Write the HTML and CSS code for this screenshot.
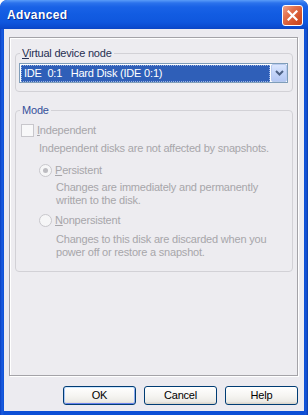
FILE: index.html
```html
<!DOCTYPE html>
<html>
<head>
<meta charset="utf-8">
<link rel="stylesheet" href="styles.css">
</head>
<body>
<div class="window">
  <div class="titlebar">
    <span class="title">Advanced</span>
    <span class="close">
      <svg width="11" height="11" viewBox="0 0 11 11"><path d="M1.5 1.5 L9.5 9.5 M9.5 1.5 L1.5 9.5" stroke="#fff" stroke-width="2.2" stroke-linecap="square"/></svg>
    </span>
  </div>
  <div class="client">
    <div class="page">
      <fieldset class="group g1">
        <legend><u>V</u>irtual device node</legend>
        <div class="combo">
          <div class="combo-field"><span class="combo-text">IDE  0:1   Hard Disk (IDE 0:1)</span></div>
          <span class="combo-btn">
            <svg width="9" height="6" viewBox="0 0 9 6"><path d="M1 1 L4.5 4.5 L8 1" fill="none" stroke="#4d6185" stroke-width="2"/></svg>
          </span>
        </div>
      </fieldset>
      <fieldset class="group g2">
        <legend>Mode</legend>
        <div class="mode">
          <div class="opt"><span class="check"></span><span><u>I</u>ndependent</span></div>
          <p class="desc">Independent disks are not affected by snapshots.</p>
          <div class="sub">
            <div class="opt"><span class="radio on"></span><span><u>P</u>ersistent</span></div>
            <p class="note n1">Changes are immediately and permanently<br>written to the disk.</p>
            <div class="opt o2"><span class="radio"></span><span><u>N</u>onpersistent</span></div>
            <p class="note n2">Changes to this disk are discarded when you<br>power off or restore a snapshot.</p>
          </div>
        </div>
      </fieldset>
    </div>
    <div class="buttons">
      <span class="btn default">OK</span>
      <span class="btn">Cancel</span>
      <span class="btn">Help</span>
    </div>
  </div>
</div>
</body>
</html>
```

FILE: styles.css
```css
html, body {
  margin: 0;
  padding: 0;
  background: #ffffff;
}
body {
  font-family: "Liberation Sans", Arial, sans-serif;
  font-size: 11px;
  line-height: 13px;
  letter-spacing: -0.2px;
}
.window {
  width: 308px;
  height: 415px;
  box-sizing: border-box;
  border-radius: 7px 7px 0 0;
  background: linear-gradient(to right, #0a3fc0 0px, #1a5ce0 2px, #0c4fd6 4px, #0c4fd6 304px, #1655d8 306px, #0a3aa8 308px);
  display: flex;
  flex-direction: column;
  overflow: hidden;
}
.titlebar {
  height: 29px;
  flex: 0 0 29px;
  display: flex;
  align-items: center;
  justify-content: space-between;
  padding: 0 5px 0 7px;
  border-radius: 7px 7px 0 0;
  background: linear-gradient(to bottom, #5a9cf8 0px, #2b72ec 3px, #1962e6 7px, #125ce2 14px, #0f57de 22px, #0b4bd0 27px, #0a45c4 29px);
}
.title {
  color: #ffffff;
  font-weight: bold;
  font-size: 12px;
  letter-spacing: 0.4px;
  text-shadow: 1px 1px 0 #0b2c8a;
  margin-top: 1px;
}
.close {
  width: 21px;
  height: 21px;
  box-sizing: border-box;
  border: 1px solid #ffffff;
  border-radius: 3px;
  background: linear-gradient(135deg, #f0a38a 0%, #e2714d 35%, #d4532b 70%, #c8431c 100%);
  display: flex;
  align-items: center;
  justify-content: center;
  margin-top: 1px;
}
.client {
  flex: 1;
  margin: 0 4px 4px 4px;
  background: #ecebf0;
  padding: 8px 6px 6px 5px;
  display: flex;
  flex-direction: column;
}
.page {
  height: 339px;
  box-sizing: border-box;
  border: 1px solid #a4a3a8;
  box-shadow: inset 1px 1px 0 #ffffff, 1px 1px 0 #ffffff;
  background: #edecf0;
  width: 289px;
  padding: 0 0 0 5px;
}
.group {
  width: 278px;
  box-sizing: border-box;
  margin: 0;
  border: 1px solid #d2d1d6;
  border-radius: 4px;
  padding: 0 4px 0 3px;
}
.group legend {
  padding: 0 2px;
  margin-left: 1px;
  line-height: 13px;
}
.g1 legend {
  color: #262f52;
}
.g2 legend {
  color: #35509a;
}
.g1 {
  margin-top: 9px;
  padding-top: 3px;
  padding-bottom: 8px;
}
.g2 {
  margin-top: 12px;
  padding-top: 7px;
  padding-bottom: 12px;
}
.combo {
  height: 20px;
  box-sizing: border-box;
  border: 1px solid #7f9db9;
  background: #ffffff;
  display: flex;
  padding: 1px 0 0 1px;
}
.combo-field {
  flex: 1;
  height: 17px;
  background: #2f5fb8;
  border: 1px dotted #9db4e4;
  box-sizing: border-box;
  display: flex;
  align-items: center;
  padding-left: 2px;
}
.combo-text {
  color: #ffffff;
  white-space: pre;
}
.combo-btn {
  width: 16px;
  height: 18px;
  margin-top: -1px;
  margin-left: 1px;
  box-sizing: border-box;
  border: 1px solid #b9cbef;
  border-radius: 2px;
  background: linear-gradient(to bottom, #dbe6fd 0%, #c4d5f9 50%, #b4c7f3 100%);
  display: flex;
  align-items: center;
  justify-content: center;
}
.mode {
  margin-left: 2px;
  color: #a7a6aa;
}
.opt {
  display: flex;
  align-items: center;
  height: 13px;
  gap: 3px;
}
.check {
  width: 13px;
  height: 13px;
  box-sizing: border-box;
  border: 1px solid #c8c7cc;
  background: #f8f8f9;
}
.radio {
  width: 13px;
  height: 13px;
  box-sizing: border-box;
  border: 1px solid #c8c7cc;
  border-radius: 50%;
  background: #f6f6f7;
  display: flex;
  align-items: center;
  justify-content: center;
}
.radio.on::after {
  content: "";
  width: 5px;
  height: 5px;
  border-radius: 50%;
  background: #bdbcc1;
}
p {
  margin: 0;
}
.desc {
  margin: 5px 0 0 18px;
}
.sub {
  margin: 9px 0 0 18px;
}
.note {
  margin-left: 17px;
}
.n1 {
  margin-top: 4px;
}
.o2 {
  margin-top: 7px;
}
.n2 {
  margin-top: 6px;
}
.buttons {
  margin-top: 10px;
  display: flex;
  justify-content: flex-end;
  gap: 8px;
}
.btn {
  width: 73px;
  height: 19px;
  box-sizing: border-box;
  border: 1px solid #003c74;
  border-radius: 3px;
  background: linear-gradient(to bottom, #ffffff 0%, #f6f5f2 50%, #ecebe6 85%, #d6d0c5 100%);
  display: flex;
  align-items: center;
  justify-content: center;
  color: #000000;
}
.btn.default {
  box-shadow: inset 0 1px 0 #cee7ff, inset 1px 0 0 #a8c5f5, inset -1px 0 0 #8daaf0, inset 0 -1px 0 #6982ee;
}
```
